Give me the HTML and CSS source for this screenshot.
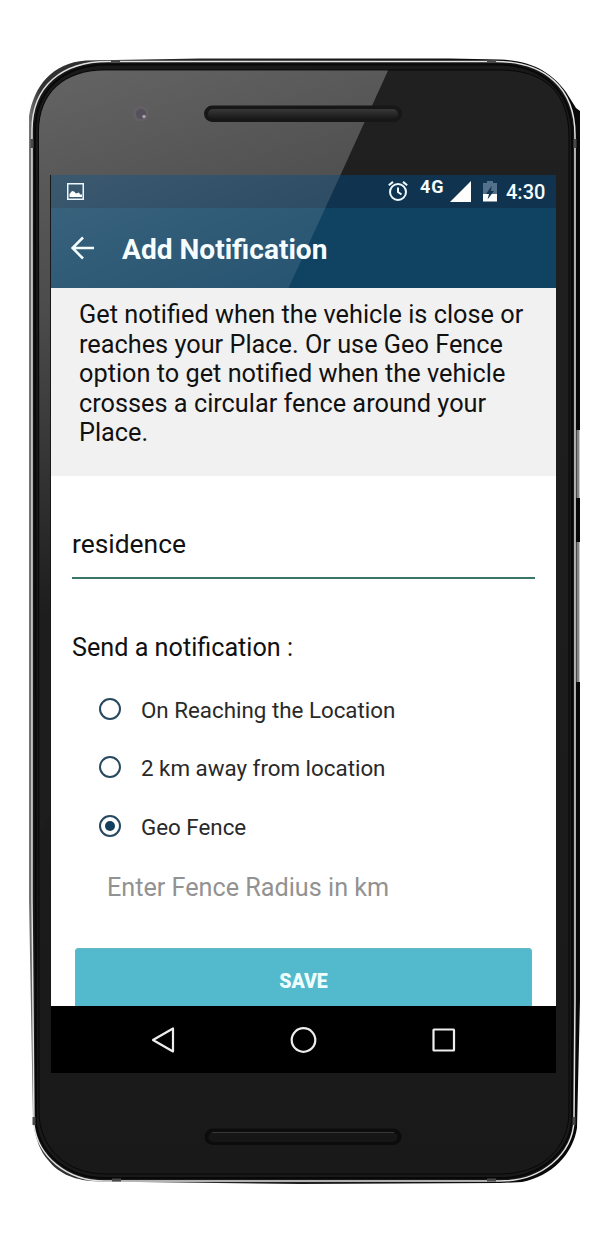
FILE: index.html
```html
<!DOCTYPE html>
<html lang="en">
<head>
<meta charset="utf-8">
<title>Add Notification</title>
<link rel="stylesheet" href="styles.css">
</head>
<body>
<main class="device">
  <svg class="shell" viewBox="0 0 608 1241" aria-hidden="true">
    <defs>
      <linearGradient id="glare" gradientUnits="userSpaceOnUse" x1="80" y1="60" x2="230" y2="560">
        <stop offset="0" stop-color="#646464"/>
        <stop offset=".45" stop-color="#4b4b4b"/>
        <stop offset="1" stop-color="#1d1d1d"/>
      </linearGradient>
      <linearGradient id="slot" x1="0" y1="0" x2="0" y2="1">
        <stop offset="0" stop-color="#383838"/>
        <stop offset="1" stop-color="#181818"/>
      </linearGradient>
      <linearGradient id="body" x1="0" y1="0" x2="0" y2="1">
        <stop offset="0" stop-color="#202020"/>
        <stop offset="1" stop-color="#191919"/>
      </linearGradient>
      <linearGradient id="edge" x1="0" y1="0" x2="1" y2="0">
        <stop offset="0" stop-color="#777"/>
        <stop offset=".02" stop-color="#333"/>
        <stop offset=".95" stop-color="#080808"/>
      </linearGradient>
    </defs>
    <path fill="url(#edge)" d="M29 116C34 86 52 63 86 60.500L200 58.500H450L500 59.500C533 61 552 73 566 92L576 108L580 111V1000L577 1128C573 1154 552 1176 522 1182L500 1183L300 1184L100 1181.500C75 1181 59 1174 48 1160Q36 1147 33 1120L29 900Z"/>
    <path stroke="#858585" d="M578 430v68M578 542v140" stroke-width="3"/>
    <path stroke="#c9c9c9" d="M579.500 430v68M579.500 542v140"/>
    <path fill="#191919" stroke="#e2e2e2" stroke-width="1.500" d="M32 130C32 86 62 61.500 108 61.500H496C545 61.500 575 88 575 135V1000L574 1120C573 1154 542 1181 500 1181H105C66 1181 38 1156 34 1125L32 900Z"/>
    <path fill="none" stroke="#080808" stroke-width="2" d="M35 132C35 91 62 64.500 108 64.500H496C543 64.500 572 91 572 135V1120C570 1151 541 1178 500 1178H105C68 1178 40 1155 36 1123Z"/>
    <path fill="url(#body)" stroke="#070707" d="M38.500 132C38.500 92 64 70 105 70H500C545 70 569 93 569 137V1112C569 1147 543 1174 500 1174H105C66 1174 39 1147 39 1112Z"/>
    <path fill="url(#glare)" d="M39 132C39 93 64 70.500 105 70.500H388L40 836Z"/>
    <path stroke="#494949" stroke-width="3" d="M111 61.500h9M487 61.500h9M112 1180h9M487 1180h9M32 139v9M575 139v9M34 1117v8M574 1117v8"/>
    <circle cx="140.500" cy="113.500" r="8" fill="#625f65"/>
    <circle cx="141" cy="114" r="5" fill="#55505b"/>
    <circle cx="144" cy="116.500" r="1.700" fill="#aaa0b0"/>
    <rect x="204" y="105.500" width="198" height="16.500" rx="8.250" fill="#171717"/>
    <rect x="208" y="109" width="190" height="10" rx="5" fill="url(#slot)"/>
    <rect x="204.500" y="1128.500" width="197" height="16.500" rx="8.250" fill="#0c0c0c"/>
    <rect x="208.500" y="1132" width="189" height="10" rx="5" fill="#161616"/>
    <path d="M212 1132.500h182" stroke="#383838"/>
  </svg>

  <section class="screen">
    <header class="top">
      <div class="status">
        <svg class="picture" viewBox="0 0 17 17"><rect x=".75" y=".75" width="15.500" height="15.500"/><path d="M2.500 14v-3l2.500-3 2 .5 2 2 3-1 1 2h2V14z"/></svg>
        <div class="indicators">
          <svg class="alarm" viewBox="0 0 20 20"><circle cx="10" cy="11" r="8"/><path d="M10 6.500V11l3.500 2.500M.8 4.200 5 .9M15 .9l4.200 3.300"/></svg>
          <span class="network">4G</span>
          <svg class="signal" viewBox="0 0 21 21"><path d="M0 21 21 0v21z"/></svg>
          <svg class="battery" viewBox="0 0 14 21"><path fill="#53718a" d="M4 0h6v2h4v11H0V2h4z"/><path fill="#fff" d="M0 13h14v7.500H0z"/><path fill="#14344f" d="M8.500 5 3 13h3l-1.500 5.500L11 10H8z"/></svg>
          <time class="clock">4:30</time>
        </div>
      </div>
      <div class="appbar">
        <svg class="back" viewBox="0 0 24 24"><path d="M23 12H2M12 1.500 1.500 12 12 22.500"/></svg>
        <h1 class="title">Add Notification</h1>
      </div>
      <svg class="reflection" viewBox="0 0 506 114" preserveAspectRatio="none">
        <defs><linearGradient id="sheen" x1="0" y1="0" x2="1" y2="1"><stop offset="0" stop-color="#fff" stop-opacity=".18"/><stop offset="1" stop-color="#fff" stop-opacity=".09"/></linearGradient></defs>
        <path fill="url(#sheen)" d="M0 0H290L238 114H0z"/>
      </svg>
    </header>

    <p class="intro">Get notified when the vehicle is close or<br>reaches your Place. Or use Geo Fence<br>option to get notified when the vehicle<br>crosses a circular fence around your<br>Place.</p>

    <form class="form">
      <div class="place">residence</div>
      <h2 class="label">Send a notification :</h2>
      <div class="options">
        <div class="option"><span class="radio"></span><span>On Reaching the Location</span></div>
        <div class="option"><span class="radio"></span><span>2 km away from location</span></div>
        <div class="option"><span class="radio checked"></span><span>Geo Fence</span></div>
      </div>
      <div class="radius">Enter Fence Radius in km</div>
      <button class="save" type="button">SAVE</button>
    </form>

    <nav class="nav">
      <svg viewBox="0 0 28 28"><path d="M24 2.500v23L4 14z"/></svg>
      <svg viewBox="0 0 28 28"><circle cx="13.500" cy="14" r="11.800"/></svg>
      <svg viewBox="0 0 28 28"><rect x="3.500" y="3.500" width="20.500" height="21" rx=".5"/></svg>
    </nav>
  </section>
</main>
</body>
</html>
```

FILE: styles.css
```css
* { box-sizing: border-box; }

body {
  margin: 0;
  background: #fff;
  font-family: Roboto, "Liberation Sans", sans-serif;
}

.device {
  position: relative;
  width: 608px;
  height: 1241px;
  padding: 175px 52px 168px 50px;
  overflow: hidden;
}

.shell {
  position: absolute;
  inset: 0;
  width: 100%;
  height: 100%;
}

.screen {
  position: relative;
  display: flex;
  flex-direction: column;
  height: 898px;
  border-left: 1px solid #181818;
  background: #fff;
}

.top {
  position: relative;
  flex: none;
  color: #f5fdff;
}

.status {
  display: flex;
  justify-content: space-between;
  height: 33px;
  padding: 7px 11px 0 16px;
  background: #10344f;
}

.picture { width: 17px; height: 17px; margin-top: 1px; }
.picture rect { fill: none; stroke: #e8f5fb; stroke-width: 1.5; }
.picture path { fill: #fff; }

.indicators { display: flex; align-items: flex-start; }

.alarm {
  width: 20px;
  height: 20px;
  margin-top: -1px;
  fill: none;
  stroke: #eefaff;
  stroke-width: 2;
}

.network {
  width: 25px;
  margin: -5px 0 0 12px;
  font-size: 18px;
  font-weight: 700;
  line-height: 20px;
  letter-spacing: .8px;
}

.signal { width: 21px; height: 21px; margin-left: 5px; margin-top: -1px; fill: #fff; }
.battery { width: 14px; height: 21px; margin-left: 12px; margin-top: -1px; }

.clock {
  width: 39px;
  margin-left: 9px;
  font-size: 20px;
  font-weight: 500;
  line-height: 20px;
}

.appbar {
  display: flex;
  align-items: center;
  height: 80px;
  padding-left: 20px;
  background: #104262;
}

.back { width: 24px; height: 24px; fill: none; stroke: #f3fdff; stroke-width: 2.5; }

.title {
  margin: 3px 0 0 27px;
  font-size: 28.1px;
  font-weight: 700;
  line-height: 32px;
}

.reflection {
  position: absolute;
  inset: 0;
  width: 100%;
  height: 100%;
}

.intro {
  flex: none;
  height: 188px;
  margin: 0;
  padding: 12px 0 0 28px;
  background: #f1f1f1;
  color: #111;
  font-size: 25.3px;
  line-height: 29.6px;
  white-space: nowrap;
}

.form {
  display: flex;
  flex-direction: column;
  flex: 1;
  min-height: 0;
  padding: 52px 21px 0;
  overflow: hidden;
}

.place {
  flex: none;
  height: 51px;
  border-bottom: 2px solid #3b7768;
  color: #111;
  font-size: 26.4px;
  line-height: 32px;
}

.label {
  margin: 53px 0 0;
  color: #111;
  font-size: 25.2px;
  font-weight: 400;
  line-height: 32px;
}

.options { margin: 16.6px 0 0 27px; }

.option {
  display: flex;
  align-items: center;
  height: 58.5px;
  color: #292929;
  font-size: 22.35px;
}

.radio {
  display: grid;
  place-items: center;
  width: 22px;
  height: 22px;
  margin: -2px 20px 0 0;
  border: 2px solid #27495f;
  border-radius: 50%;
}

.checked::after {
  content: "";
  width: 10px;
  height: 10px;
  border-radius: 50%;
  background: #123f5d;
}

.radius {
  margin: 16.4px 0 0 35px;
  color: #929292;
  font-size: 25.2px;
  line-height: 32px;
}

.save {
  flex: none;
  height: 66px;
  margin: 43.5px 3px 0;
  padding: 1px 0 0;
  border: 1px solid #69b5c1;
  border-radius: 3px;
  background: #53b9cd;
  color: #efffff;
  font: 900 19.5px/64px Roboto, sans-serif;
}

.nav {
  display: flex;
  flex: none;
  gap: 112.5px;
  height: 67px;
  padding-left: 98px;
  align-items: center;
  background: #000;
}

.nav svg { width: 28px; height: 28px; fill: none; stroke: #eee; stroke-width: 2.2; stroke-linejoin: round; }
```
